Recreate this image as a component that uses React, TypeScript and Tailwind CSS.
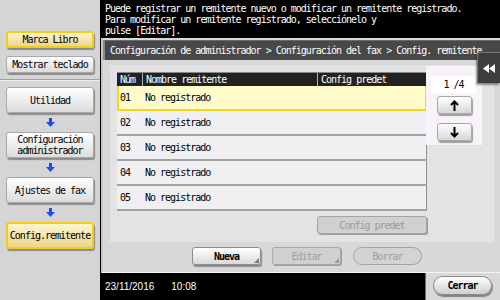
import React from "react";

const mono = "font-['DejaVu_Sans_Mono',monospace] text-[10px] tracking-[-1px]";

function BlueArrow() {
  return (
    <svg width="9" height="9" viewBox="0 0 9 9">
      <polygon points="3,0 6,0 6,4 9,4 4.5,9 0,4 3,4" fill="#1d4ef5" />
    </svg>
  );
}

function SideBtn({ children, yellow, h }: { children: React.ReactNode; yellow?: boolean; h: string }) {
  const base = yellow
    ? "bg-linear-to-b from-[#fdf5cf] to-[#ead68e] border-2 border-[#f1cd18]"
    : "bg-linear-to-b from-[#ffffff] to-[#dcdcdc] border border-[#a9a9a9]";
  return (
    <div
      className={`${base} ${h} w-[88px] ml-[6px] rounded-[3px] shadow-[1px_2px_1px_rgba(0,0,0,0.35)] flex items-center justify-center text-center leading-[11px] text-black ${mono}`}
    >
      {children}
    </div>
  );
}

function Spacer() {
  return (
    <div className="h-[19px] w-[100px] flex items-center justify-center">
      <BlueArrow />
    </div>
  );
}

function Row({ n, sel }: { n: string; sel?: boolean }) {
  return (
    <div
      className={`h-[25px] flex items-center ${mono} text-black ${
        sel
          ? "bg-[#fffcc9] border-2 border-t-0 border-[#f4d61a]"
          : "bg-[#f0eff2] border-b-2 border-[#a3a3a3] border-r border-r-[#8d8d8d]"
      }`}
    >
      <span className={sel ? "pl-[1px] w-[26px]" : "pl-[3px] w-[28px]"}>{n}</span>
      <span>No registrado</span>
    </div>
  );
}

function Corner({ color }: { color: string }) {
  return (
    <svg className="absolute right-[1px] bottom-[1px]" width="5" height="5" viewBox="0 0 5 5">
      <polygon points="5,0 5,5 0,5" fill={color} />
    </svg>
  );
}

export default function App() {
  return (
    <div className="w-[500px] h-[300px] flex overflow-hidden">
      {/* Sidebar */}
      <div className="w-[100px] h-[300px] bg-[#d5d5d5] flex flex-col">
        <div className="h-[80px] border-b border-[#9e9e9e] pt-[31px] flex flex-col gap-[8px]">
          <SideBtn yellow h="h-[17px]">Marca Libro</SideBtn>
          <SideBtn h="h-[17px]">Mostrar teclado</SideBtn>
        </div>
        <div className="border-t border-[#ececec] pt-[6px] flex flex-col">
          <SideBtn h="h-[26px]">Utilidad</SideBtn>
          <Spacer />
          <SideBtn h="h-[26px]">
            Configuración
            <br />
            administrador
          </SideBtn>
          <Spacer />
          <SideBtn h="h-[26px]">Ajustes de fax</SideBtn>
          <Spacer />
          <SideBtn yellow h="h-[27px]">Config.remitente</SideBtn>
        </div>
      </div>

      {/* Main */}
      <div className="w-[400px] h-[300px] bg-black flex flex-col">
        <div className={`h-[38px] pl-[5px] pt-[3px] text-white leading-[11px] ${mono}`}>
          <div>Puede registrar un remitente nuevo o modificar un remitente registrado.</div>
          <div>Para modificar un remitente registrado, selecciónelo y</div>
          <div>pulse [Editar].</div>
        </div>

        <div className="relative h-[235px] ml-[1px] bg-[#d8d8d8] border-l-2 border-[#c6c6c6] border-b border-b-[#f4f4f4] flex flex-col">
          {/* title bar */}
          <div className={`mt-[2px] h-[20px] bg-[#484848] border-t border-[#6a6a6a] border-l-2 border-l-[#8a8a8a] text-white flex items-center pl-[5px] whitespace-nowrap overflow-hidden ${mono}`}>
            Configuración de administrador &gt; Configuración del fax &gt; Config. remitente
          </div>

          {/* collapse tab */}
          <div className="absolute right-0 top-[14px] w-[23px] h-[31px] bg-[#3e3e3e] border-l border-t border-[#777] rounded-tl-[3px] shadow-[-1px_2px_2px_rgba(0,0,0,0.4)] flex items-center justify-center">
            <svg width="12" height="9" viewBox="0 0 12 9">
              <polygon points="6,0 6,9 0,4.5" fill="#fff" />
              <polygon points="12,0 12,9 6,4.5" fill="#fff" />
            </svg>
          </div>

          {/* light region */}
          <div className="mt-[5px] ml-[7px] w-[384px] h-[177px] bg-[#e3e3e3] flex">
            <div className="pl-[7px] pt-[7px] w-[317px] flex flex-col">
              <div className="w-[310px] flex flex-col">
                <div className={`h-[14px] bg-[#222] border-t border-[#888] flex items-center text-white ${mono}`}>
                  <span className="w-[26px] pl-[3px] border-r border-[#b0b0b0] h-full flex items-center">Núm</span>
                  <span className="w-[175px] pl-[3px] border-r border-[#b0b0b0] h-full flex items-center">Nombre remitente</span>
                  <span className="pl-[3px]">Config predet</span>
                </div>
                <Row n="01" sel />
                <Row n="02" />
                <Row n="03" />
                <Row n="04" />
                <Row n="05" />
              </div>
              <div className="mt-[5px] self-end w-[110px] h-[18px] rounded-[3px] bg-[#d0d0d0] border border-[#a5a5a5] shadow-[1px_1px_0_#9a9a9a] flex items-center justify-center">
                <span className={`text-[#9b9b9b] ${mono}`}>Config predet</span>
              </div>
            </div>

            {/* pager */}
            <div className="ml-[-1px] mt-[1px] w-[56px] h-[79px] bg-[#f8f3f8] flex flex-col">
              <div className={`mt-[10px] ml-[5px] w-[45px] h-[17px] bg-white flex items-center justify-center text-black ${mono}`}>
                1 /4
              </div>
              <div className="mt-[3px] ml-[11px] w-[35px] h-[18px] rounded-[3px] bg-linear-to-b from-[#fff] to-[#d8d8d8] border border-[#a8a8a8] shadow-[1px_2px_1px_rgba(0,0,0,0.35)] flex items-center justify-center">
                <svg width="9" height="11" viewBox="0 0 9 11">
                  <path d="M4.5 1.5 V11 M1 5 L4.5 1.5 L8 5" stroke="#000" strokeWidth="2" fill="none" />
                </svg>
              </div>
              <div className="mt-[9px] ml-[11px] w-[35px] h-[18px] rounded-[3px] bg-linear-to-b from-[#fff] to-[#d8d8d8] border border-[#a8a8a8] shadow-[1px_2px_1px_rgba(0,0,0,0.35)] flex items-center justify-center">
                <svg width="9" height="11" viewBox="0 0 9 11">
                  <path d="M4.5 0 V9.5 M1 6 L4.5 9.5 L8 6" stroke="#000" strokeWidth="2" fill="none" />
                </svg>
              </div>
            </div>
          </div>

          {/* bottom buttons */}
          <div className="mt-[5px] pl-[89px] flex">
            <div className="relative w-[69px] h-[18px] rounded-[3px] bg-linear-to-b from-[#fff] to-[#dadada] border border-[#8e8e8e] shadow-[1px_2px_1px_rgba(0,0,0,0.35)] flex items-center justify-center">
              <span className={`text-black font-bold ${mono}`}>Nueva</span>
              <Corner color="#7a7a7a" />
            </div>
            <div className="relative ml-[11px] w-[69px] h-[18px] rounded-[3px] bg-[#d0d0d0] border border-[#a8a8a8] shadow-[1px_1px_0_#9e9e9e] flex items-center justify-center">
              <span className={`text-[#9d9d9d] ${mono}`}>Editar</span>
              <Corner color="#9a9a9a" />
            </div>
            <div className="ml-[12px] w-[69px] h-[18px] rounded-full bg-[#d3d3d3] border border-[#a2a2a2] flex items-center justify-center">
              <span className={`text-[#9d9d9d] ${mono}`}>Borrar</span>
            </div>
          </div>
        </div>

        {/* bottom bar */}
        <div className="h-[27px] flex">
          <div className="w-[325px] h-full flex items-center pl-[5px] text-white font-['Liberation_Sans',sans-serif] text-[10px]">
            <span>23/11/2016</span>
            <span className="ml-[17px]">10:08</span>
          </div>
          <div className="w-[75px] h-full bg-[#d8d8d8] border-l border-[#6a6a6a] pl-[7px] pt-[3px]">
            <div className="w-[59px] h-[19px] rounded-full bg-linear-to-b from-[#fff] to-[#cfcfcf] border border-[#8a8a8a] shadow-[1px_2px_1px_rgba(0,0,0,0.4)] flex items-center justify-center">
              <span className={`text-black font-bold ${mono}`}>Cerrar</span>
            </div>
          </div>
        </div>
      </div>
    </div>
  );
}
